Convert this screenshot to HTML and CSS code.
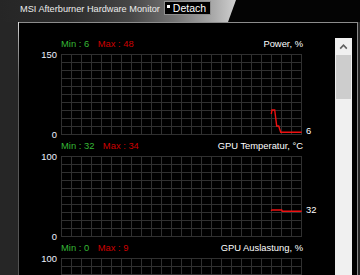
FILE: index.html
```html
<!DOCTYPE html>
<html lang="de">
<head>
<meta charset="utf-8">
<title>MSI Afterburner Hardware Monitor</title>
<link rel="stylesheet" href="styles.css">
</head>
<body>
<div class="screen">
  <header class="titlebar">
    <div class="titlebar-bg">
      <span class="title">MSI Afterburner Hardware Monitor</span>
      <button class="detach" type="button"><span class="dot"></span>Detach</button>
    </div>
  </header>
  <div class="row">
    <div class="strip"></div>
    <div class="edge"></div>
    <div class="panel">
      <div class="graphs">
        <section class="graph">
          <div class="graph-head"><span class="min">Min : 6</span><span class="max">Max : 48</span><span class="name">Power, %</span></div>
          <div class="graph-row">
            <div class="axis"><span>150</span><span>0</span></div>
            <div class="grid">
              <svg class="trace" viewBox="0 0 241 81"><polyline points="210.3,60 211,56 213.7,56 215.7,72 217.7,72 219.7,78.3 240.7,78.3"/></svg>
              <span class="value" style="top:71px">6</span>
            </div>
          </div>
        </section>
        <section class="graph">
          <div class="graph-head"><span class="min">Min : 32</span><span class="max">Max : 34</span><span class="name">GPU Temperatur, °C</span></div>
          <div class="graph-row">
            <div class="axis"><span>100</span><span>0</span></div>
            <div class="grid">
              <svg class="trace" viewBox="0 0 241 81"><polyline points="210,54.7 211,54 220.7,54 221.3,55.3 240.7,55.3"/></svg>
              <span class="value" style="top:48px">32</span>
            </div>
          </div>
        </section>
        <section class="graph">
          <div class="graph-head"><span class="min">Min : 0</span><span class="max">Max : 9</span><span class="name">GPU Auslastung, %</span></div>
          <div class="graph-row">
            <div class="axis"><span>100</span></div>
            <div class="grid"></div>
          </div>
        </section>
      </div>
      <div class="scrollbar">
        <div class="scroll-up">
          <svg viewBox="0 0 17 17" width="17" height="17"><path d="M5.2 10.6 L8.5 7.2 L11.8 10.6"/></svg>
        </div>
        <div class="thumb"></div>
      </div>
    </div>
  </div>
</div>
</body>
</html>
```
FILE: styles.css
```css
html, body {
  margin: 0;
  width: 360px;
  height: 275px;
  overflow: hidden;
  background: #262626;
  font-family: "Liberation Sans", Arial, sans-serif;
}

.screen {
  display: flex;
  flex-direction: column;
  height: 275px;
}

.titlebar {
  height: 22px;
  flex: none;
  background: #040404;
}

.titlebar-bg {
  height: 22px;
  box-sizing: border-box;
  padding-top: 1px;
  display: flex;
  align-items: flex-start;
  clip-path: polygon(0 0, 236px 0, 228px 22px, 0 22px);
  background: linear-gradient(to right, #262626 0, #2c2c2c 70px, #464646 130px, #747474 175px, #acacac 215px, #d0d0d0 236px, #d0d0d0 100%);
}

.title {
  color: #ececec;
  font-size: 9.2px;
  line-height: 11px;
  margin: 2.5px 0 0 20px;
  white-space: nowrap;
}

.detach {
  display: flex;
  align-items: flex-start;
  width: 47px;
  height: 14px;
  box-sizing: border-box;
  margin: 0 0 0 4.4px;
  padding: 0 0 0 2px;
  border: 1px solid #8f8f8f;
  background: #000;
  color: #fff;
  font-family: inherit;
  font-size: 10.5px;
  line-height: 12px;
}

.dot {
  width: 3px;
  height: 3px;
  background: #fff;
  margin: 3px 2.5px 0 0;
  flex: none;
}

.row {
  flex: 1;
  display: flex;
  min-height: 0;
}

.strip {
  width: 18px;
  flex: none;
}

.edge {
  width: 1px;
  flex: none;
  background: linear-gradient(#dcdcdc, #a0a0a0 20px, #5c5c5c 60px, #525252);
}

.panel {
  flex: 1;
  display: flex;
  min-width: 0;
  overflow: hidden;
  background: #000;
  border-top: 1px solid #8c8c8c;
  border-right: 1px solid #8c8c8c;
  margin-right: 2px;
}

.graphs {
  flex: 1;
  min-width: 0;
  padding-top: 10px;
}

.graph-head {
  display: flex;
  align-items: center;
  height: 21px;
  width: 242px;
  margin-left: 42px;
  font-size: 9.4px;
  line-height: 11px;
  white-space: nowrap;
}

.min {
  color: #36b836;
}

.max {
  color: #cc0000;
  margin-left: 8.5px;
}

.name {
  margin-left: auto;
  color: #fff;
}

.graph-row {
  display: flex;
}

.axis {
  width: 42px;
  height: 81px;
  flex: none;
  box-sizing: border-box;
  padding-right: 4px;
  display: flex;
  flex-direction: column;
  justify-content: space-between;
  align-items: flex-end;
  color: #eef2ff;
  font-size: 9.4px;
  line-height: 11px;
}

.axis span:first-child {
  margin-top: -5.4px;
}

.axis span:last-child:not(:first-child) {
  margin-bottom: -5px;
}

.grid {
  position: relative;
  width: 241px;
  height: 81px;
  flex: none;
  background-image:
    linear-gradient(to right, #303030 1px, transparent 1px),
    linear-gradient(to bottom, #303030 1px, transparent 1px);
  background-size: 10px 100%, 100% 8px;
}

.trace {
  position: absolute;
  left: 0;
  top: 0;
  width: 241px;
  height: 81px;
  overflow: visible;
}

.trace polyline {
  fill: none;
  stroke: #ee1111;
  stroke-width: 1.4;
}

.value {
  position: absolute;
  left: 245px;
  color: #fff;
  font-size: 9.4px;
  line-height: 11px;
}

.scrollbar {
  width: 17px;
  flex: none;
  margin: 15px 5px 0 0;
  background: #f0f0f0;
  display: flex;
  flex-direction: column;
}

.scroll-up {
  height: 17px;
  flex: none;
}

.scroll-up svg {
  display: block;
}

.scroll-up path {
  fill: none;
  stroke: #606060;
  stroke-width: 1.6;
}

.thumb {
  height: 44px;
  margin: 0 1px;
  background: #cdcdcd;
}
```
